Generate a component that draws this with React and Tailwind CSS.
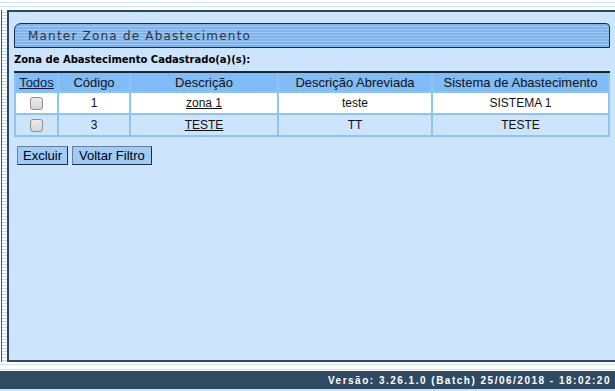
import React from 'react';

const rows = [
  { codigo: '1', descricao: 'zona 1', abreviada: 'teste', sistema: 'SISTEMA 1' },
  { codigo: '3', descricao: 'TESTE', abreviada: 'TT', sistema: 'TESTE' },
];

const Checkbox = () => (
  <div className="mx-auto h-[13px] w-[13px] rounded-[3px] border border-[#8f8f8f] bg-[linear-gradient(#ececec,#d4d4d4)]"></div>
);

const App = () => {
  return (
    <div className="flex h-[391px] w-[615px] flex-col overflow-hidden bg-white font-['Liberation_Sans',Arial,sans-serif] text-[#111]">
      {/* linhas do topo */}
      <div className="h-[10px] shrink-0 bg-[repeating-linear-gradient(#ffffff_0px,#ffffff_2px,#cfe3f5_2px,#cfe3f5_3px,#ffffff_3px,#ffffff_4px)]"></div>

      <div className="flex h-[352px] shrink-0">
        <div className="ml-[1px] w-[6px] border-l border-[#3b566f] bg-[repeating-linear-gradient(#ffffff_0px,#ffffff_2px,#b9d7f3_2px,#b9d7f3_3px)]"></div>

        <div className="flex-1 border-t-2 border-b-2 border-l-2 border-[#2f4860] bg-[#cce5fd] px-[5px] pt-[11px]">
          <div className="flex h-[25px] items-center rounded-tl-[7px] rounded-tr-[4px] border border-[#1d2b3a] bg-[repeating-linear-gradient(#80b4ee_0px,#80b4ee_2px,#a3c9f3_2px,#a3c9f3_3px)] pl-[13px]">
            <span className="font-['DejaVu_Sans',Verdana,sans-serif] text-[12px] tracking-[1.2px] text-[#333]">
              Manter Zona de Abastecimento
            </span>
          </div>

          <div className="mt-[6px] font-['DejaVu_Sans',Verdana,sans-serif] text-[10px] font-bold leading-[12px] text-black">
            Zona de Abastecimento Cadastrado(a)(s):
          </div>

          <div className="mt-[5px] border-t-2 border-[#1a2633]">
            <table className="w-full border-collapse text-center">
              <colgroup>
                <col className="w-[43px]" />
                <col className="w-[72px]" />
                <col className="w-[148px]" />
                <col className="w-[154px]" />
                <col />
              </colgroup>
              <thead>
                <tr className="h-[19px] bg-[#80bcf6] text-[13px] leading-[15px]">
                  <th className="border-2 border-t-0 border-[#8ec3f5] p-0 font-normal">
                    <span className="underline text-[#0b1d3f]">Todos</span>
                  </th>
                  <th className="border-2 border-t-0 border-[#8ec3f5] p-0 font-normal">Código</th>
                  <th className="border-2 border-t-0 border-[#8ec3f5] p-0 font-normal">Descrição</th>
                  <th className="border-2 border-t-0 border-[#8ec3f5] p-0 font-normal">Descrição Abreviada</th>
                  <th className="border-2 border-t-0 border-[#8ec3f5] p-0 font-normal">Sistema de Abastecimento</th>
                </tr>
              </thead>
              <tbody>
                {rows.map((row, index) => (
                  <tr
                    key={row.codigo}
                    className={`h-[22px] text-[12px] leading-[14px] ${index === 0 ? 'bg-white' : 'bg-[#cce5fd]'}`}
                  >
                    <td className="border-2 border-[#8ec3f5] p-0">
                      <Checkbox />
                    </td>
                    <td className="border-2 border-[#8ec3f5] p-0">{row.codigo}</td>
                    <td className="border-2 border-[#8ec3f5] p-0">
                      <span className="underline">{row.descricao}</span>
                    </td>
                    <td className="border-2 border-[#8ec3f5] p-0">{row.abreviada}</td>
                    <td className="border-2 border-[#8ec3f5] p-0">{row.sistema}</td>
                  </tr>
                ))}
              </tbody>
            </table>
          </div>

          <div className="mt-[9px] flex gap-[4px] pl-[3px]">
            <button className="h-[19px] border border-[#6b7f93] border-r-[#1f2f3f] border-b-[#1f2f3f] bg-[#9fcbf8] px-[5px] text-[13px] leading-[16px] text-black">
              Excluir
            </button>
            <button className="h-[19px] border border-[#6b7f93] border-r-[#1f2f3f] border-b-[#1f2f3f] bg-[#9fcbf8] px-[6px] text-[13px] leading-[16px] text-black">
              Voltar Filtro
            </button>
          </div>
        </div>
      </div>

      {/* linhas do rodape */}
      <div className="h-[9px] shrink-0 bg-[repeating-linear-gradient(#ffffff_0px,#ffffff_2px,#cfe3f5_2px,#cfe3f5_3px,#ffffff_3px,#ffffff_5px)]"></div>
      <div className="flex h-[18px] shrink-0 items-center justify-end bg-[#2f4a63] pr-[4px]">
        <span className="text-[10px] font-bold tracking-[1.5px] text-white">
          Versão: 3.26.1.0 (Batch) 25/06/2018 - 18:02:20
        </span>
      </div>
      <div className="h-[2px] shrink-0 bg-[#cfe3f5]"></div>
    </div>
  );
};

export default App;
